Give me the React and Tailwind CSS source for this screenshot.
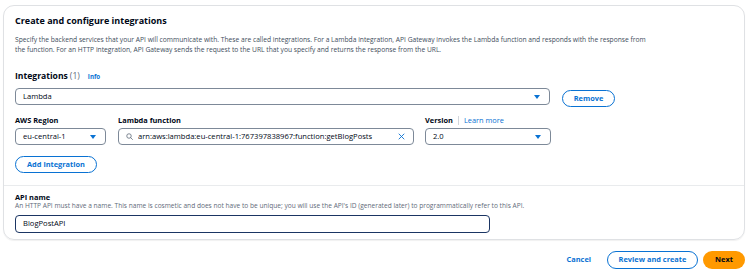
import React from "react";

const Caret = () => (
  <svg width="6" height="4" viewBox="0 0 6 4" className="shrink-0">
    <path d="M0 0H6L3 4Z" fill="#0972d3" />
  </svg>
);

const Search = () => (
  <svg width="7" height="7" viewBox="0 0 14 14" className="shrink-0">
    <circle cx="6" cy="6" r="4.5" fill="none" stroke="#5f6b7a" strokeWidth="1.6" />
    <path d="M9.3 9.3L13 13" stroke="#5f6b7a" strokeWidth="1.6" strokeLinecap="round" />
  </svg>
);

const XIcon = () => (
  <svg width="7" height="7" viewBox="0 0 14 14" className="shrink-0">
    <path d="M2 2L12 12M12 2L2 12" stroke="#0972d3" strokeWidth="1.8" strokeLinecap="round" />
  </svg>
);

export default function App() {
  return (
    <div className="w-[750px] h-[271px] bg-white pl-[3px] pt-[5px] font-['Open_Sans',sans-serif] text-[#000716] overflow-hidden">
      <div className="w-[742px] rounded-[11px] border border-[#dfe1e4] shadow-[0_1px_1px_rgba(0,7,22,0.06)]">
        <div className="px-[11px] pt-[8px] pb-[12px]">
          <h2 className="text-[9px] font-bold leading-[14px]">Create and configure integrations</h2>
          <p className="mt-[7px] max-w-[636px] text-[6.7px] leading-[10px] text-[#414d5c]">
            Specify the backend services that your API will communicate with. These are called integrations. For a Lambda integration, API Gateway invokes the Lambda function and responds with the response from the function. For an HTTP integration, API Gateway sends the request to the URL that you specify and returns the response from the URL.
          </p>
          <div className="mt-[15px] flex items-baseline leading-[12px]">
            <span className="text-[8.6px] font-bold">Integrations</span>
            <span className="ml-[2px] text-[8.6px] text-[#5f6b7a]">(1)</span>
            <span className="ml-[8px] text-[6.2px] font-bold text-[#0972d3]">Info</span>
          </div>
          <div className="mt-[5px] flex items-start gap-[12px]">
            <div className="w-[535px] h-[17px] rounded-[4px] border border-[#7d8998] flex items-center justify-between pl-[7px] pr-[9px] text-[7.6px]">
              <span>Lambda</span>
              <Caret />
            </div>
            <button className="mt-[2px] w-[53px] h-[17px] rounded-full border-[1.5px] border-[#0972d3] text-[7.4px] font-bold text-[#0972d3] flex items-center justify-center">
              Remove
            </button>
          </div>
          <div className="mt-[8px] flex items-start">
            <div className="w-[91px]">
              <div className="text-[7.4px] font-bold leading-[10px]">AWS Region</div>
              <div className="mt-[3px] h-[17px] rounded-[4px] border border-[#7d8998] flex items-center justify-between pl-[7px] pr-[9px] text-[7.6px]">
                <span>eu-central-1</span>
                <Caret />
              </div>
            </div>
            <div className="ml-[12px] w-[296px]">
              <div className="text-[7.4px] font-bold leading-[10px]">Lambda function</div>
              <div className="mt-[3px] h-[17px] rounded-[4px] border border-[#7d8998] flex items-center pl-[7px] pr-[8px] text-[7.6px]">
                <Search />
                <span className="ml-[5px] flex-1 truncate">arn:aws:lambda:eu-central-1:767397838967:function:getBlogPosts</span>
                <XIcon />
              </div>
            </div>
            <div className="ml-[11px] w-[126px]">
              <div className="flex items-center text-[7.4px] leading-[10px]">
                <span className="font-bold">Version</span>
                <span className="mx-[5px] h-[9px] w-px bg-[#d1d5db]" />
                <span className="text-[#0972d3]">Learn more</span>
              </div>
              <div className="mt-[3px] h-[17px] rounded-[4px] border border-[#7d8998] flex items-center justify-between pl-[7px] pr-[9px] text-[7.6px]">
                <span>2.0</span>
                <Caret />
              </div>
            </div>
          </div>
          <button className="mt-[11px] w-[82px] h-[17px] rounded-full border-[1.5px] border-[#0972d3] text-[7.4px] font-bold text-[#0972d3] flex items-center justify-center">
            Add integration
          </button>
        </div>
        <div className="border-t border-[#e9ebed] px-[11px] pt-[7px] pb-[6px]">
          <div className="text-[7.4px] font-bold leading-[9px]">API name</div>
          <div className="text-[6.6px] leading-[8px] text-[#5f6b7a]">
            An HTTP API must have a name. This name is cosmetic and does not have to be unique; you will use the API's ID (generated later) to programmatically refer to this API.
          </div>
          <div className="mt-[5px] w-[475px] h-[18px] rounded-[4px] border-[1.5px] border-[#1b3563] flex items-center pl-[7px] text-[7.6px]">
            BlogPostAPI
          </div>
        </div>
      </div>
      <div className="mt-[11px] flex items-center justify-end pr-[5px]">
        <span className="text-[7.4px] font-bold text-[#0972d3]">Cancel</span>
        <button className="ml-[16px] w-[91px] h-[18px] rounded-full border-[1.5px] border-[#0972d3] text-[7.4px] font-bold text-[#0972d3] flex items-center justify-center">
          Review and create
        </button>
        <button className="ml-[5px] w-[42px] h-[18px] rounded-full bg-[#ff9900] text-[7.4px] font-bold text-[#000716] flex items-center justify-center">
          Next
        </button>
      </div>
    </div>
  );
}
